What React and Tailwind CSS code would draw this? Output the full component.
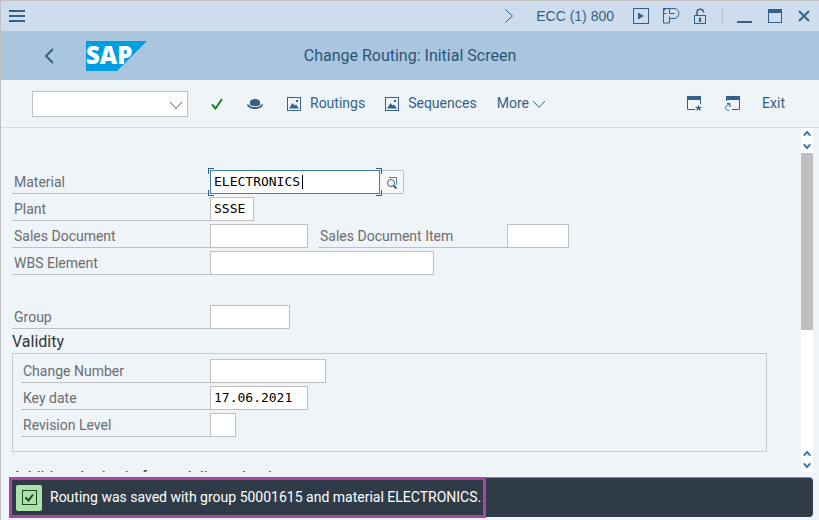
import React, { useState } from "react";

const LABEL = "text-[#6a6d70]";

const Caret = ({ direction = "down", className = "w-3 h-3", strokeWidth = 1 }) => {
  const paths = {
    down: "M1 3.5 L6 9 L11 3.5",
    up: "M1 8.5 L6 3 L11 8.5",
    left: "M9 1 L3 6 L9 11",
    right: "M3 0.5 L9 6 L3 11.5",
  };
  return (
    <svg
      viewBox="0 0 12 12"
      className={className}
      fill="none"
      stroke="currentColor"
      strokeWidth={strokeWidth}
      aria-hidden="true"
    >
      <path d={paths[direction]} vectorEffect="non-scaling-stroke" />
    </svg>
  );
};

const IconButton = ({ label, children, className = "" }) => (
  <button type="button" aria-label={label} className={`flex shrink-0 items-center justify-center ${className}`}>
    {children}
  </button>
);

const PictureIcon = () => (
  <svg viewBox="0 0 14 14" className="h-[14px] w-[14px]" aria-hidden="true">
    <rect x="0.5" y="0.5" width="13" height="13" fill="none" stroke="currentColor" />
    <path d="M2 11.5 L5.5 6 L7.5 8.5 L9 7.5 L12 11.5 Z" fill="currentColor" />
    <rect x="9" y="3" width="2" height="2" fill="currentColor" />
  </svg>
);

const SapLogo = () => (
  <svg viewBox="0 0 61 30" className="h-[30px] w-[61px] overflow-visible" role="img" aria-label="SAP">
    <path d="M0 0 H61 L31 30 H0 Z" fill="#009de0" />
    <text x="0" y="23" fontFamily="Open Sans, sans-serif" fontSize="24" fontWeight="800" fill="#fff">SAP</text>
  </svg>
);

const TitleBar = () => (
  <div className="flex h-[31px] items-center border-b border-[#bfbfbf] bg-[#cddded] pl-2 pr-[9px]">
    <IconButton label="Menu">
      <svg viewBox="0 0 16 12" className="h-3 w-4" fill="currentColor" aria-hidden="true">
        <path d="M0 0 H16 V2 H0 Z M0 5 H16 V7 H0 Z M0 10 H16 V12 H0 Z" />
      </svg>
    </IconButton>
    <div className="ml-auto flex items-center">
      <IconButton label="Expand" className="mr-5">
        <Caret direction="right" className="h-[14px] w-[14px]" />
      </IconButton>
      <span className="mr-[19px] font-['Liberation_Sans',sans-serif] text-[14px]">ECC (1) 800</span>
      <div className="flex items-center gap-[14px]">
        <IconButton label="Run">
          <svg viewBox="0 0 16 16" className="h-4 w-4" aria-hidden="true">
            <rect x="0.5" y="0.5" width="15" height="15" fill="none" stroke="currentColor" />
            <path d="M5 4.5 L11 8 L5 11.5 Z" fill="currentColor" />
          </svg>
        </IconButton>
        <IconButton label="Personalize">
          <svg viewBox="0 0 17 16" className="h-4 w-[17px]" fill="none" stroke="currentColor" aria-hidden="true">
            <path d="M0.5 0.5 H11 C17.5 0.5 17.5 10.5 11 10.5 H6.5 V15 H0.5 Z" />
            <path d="M6.5 0.5 V5.5 H11.5 M0.5 5.5 H3.5 M6.5 8.5 V10.5" />
            <path d="M0.5 0.5 H3 L0.5 3 Z" fill="currentColor" />
          </svg>
        </IconButton>
        <IconButton label="Unlock">
          <svg viewBox="0 0 12 16" className="h-4 w-3" fill="none" stroke="currentColor" aria-hidden="true">
            <rect x="0.5" y="7.5" width="11" height="8" />
            <path d="M3 7 V4 C3 0.3 9.5 0 9.5 4.5" strokeWidth="1.5" />
            <path d="M6 9.5 V13.5" strokeWidth="2" />
            <path d="M4.5 13 H7.5" />
          </svg>
        </IconButton>
      </div>
      <span className="ml-4 mr-[14px] h-4 w-px bg-[#bfbfbf]" />
      <div className="flex items-center gap-4">
        <IconButton label="Minimize">
          <svg viewBox="0 0 15 16" className="h-4 w-[15px]" fill="currentColor" aria-hidden="true">
            <path d="M0 13 H15 V15 H0 Z" />
          </svg>
        </IconButton>
        <IconButton label="Maximize">
          <svg viewBox="0 0 14 14" className="h-[14px] w-[14px]" aria-hidden="true">
            <rect x="0.5" y="0.5" width="13" height="13" fill="none" stroke="currentColor" />
            <path d="M0 0 H14 V4 H0 Z" fill="currentColor" />
          </svg>
        </IconButton>
        <IconButton label="Close">
          <svg viewBox="0 0 12 12" className="h-3 w-3" fill="none" stroke="currentColor" strokeWidth="2" aria-hidden="true">
            <path d="M1 1 L11 11 M11 1 L1 11" />
          </svg>
        </IconButton>
      </div>
    </div>
  </div>
);

const Header = () => (
  <header className="grid h-12 grid-cols-[1fr_auto_1fr] items-center bg-[#a9c6de]">
    <div className="flex items-center gap-8 pl-[43px]">
      <IconButton label="Back">
        <svg viewBox="0 0 10 16" className="h-4 w-[10px]" fill="none" stroke="currentColor" strokeWidth="2" aria-hidden="true">
          <path d="M9 1 L2 8 L9 15" />
        </svg>
      </IconButton>
      <SapLogo />
    </div>
    <h1 className="text-[16px] text-[#2d5475]">Change Routing: Initial Screen</h1>
  </header>
);

const Toolbar = () => (
  <div className="flex h-12 items-center border-b border-[#cddded] pl-[31px] pr-[34px]">
    <div className="relative">
      <input
        type="text"
        aria-label="Command"
        className="block h-[26px] w-[156px] border border-[#bfbfbf] bg-white px-1 outline-none"
      />
      <button type="button" aria-label="Command history" className="absolute right-[5px] top-[7px]">
        <Caret className="h-[14px] w-[14px]" />
      </button>
    </div>
    <IconButton label="Enter" className="ml-[23px]">
      <svg viewBox="0 0 12 12" className="h-3 w-3" fill="none" stroke="#1b7d2b" strokeWidth="2" aria-hidden="true">
        <path d="M1 6.5 L4.5 10.5 L11 1" />
      </svg>
    </IconButton>
    <IconButton label="Header" className="ml-6">
      <svg viewBox="0 0 16 10" className="h-[10px] w-4" fill="currentColor" aria-hidden="true">
        <path d="M3 6 V3 C3 -1 13 -1 13 3 V6 C11 7.5 5 7.5 3 6 Z" />
        <path d="M0 5.5 C1 5 2 5.5 2.2 6.5 C5 8.5 11 8.5 13.8 6.5 C14 5.5 15 5 16 5.5 C15 11.5 1 11.5 0 5.5 Z" />
      </svg>
    </IconButton>
    <button type="button" className="ml-6 flex items-center gap-[9px]">
      <PictureIcon />
      Routings
    </button>
    <button type="button" className="ml-5 flex items-center gap-[9px]">
      <PictureIcon />
      Sequences
    </button>
    <button type="button" className="ml-5 flex items-center gap-[3px]">
      More
      <Caret className="h-[14px] w-[14px]" />
    </button>
    <div className="ml-auto flex items-center">
      <IconButton label="Create favorite">
        <svg viewBox="0 0 15 15" className="h-[15px] w-[15px]" aria-hidden="true">
          <path d="M8 13.5 H0.5 V0.5 H13.5 V8" fill="none" stroke="currentColor" />
          <path d="M0 0 H14 V4 H0 Z" fill="currentColor" />
          <path d="M11.5 8.5 L12.4 11 H15 L13 12.5 L13.8 15 L11.5 13.5 L9.2 15 L10 12.5 L8 11 H10.6 Z" fill="currentColor" />
        </svg>
      </IconButton>
      <IconButton label="Create shortcut" className="ml-[23px]">
        <svg viewBox="0 0 15 15" className="h-[15px] w-[15px]" aria-hidden="true">
          <path d="M1.5 5 V0.5 H14.5 V13.5 H7" fill="none" stroke="currentColor" />
          <path d="M1 0 H15 V4 H1 Z" fill="currentColor" />
          <path d="M4 14.5 C-1 14 0 8.5 4.5 8.5 M2 7.5 H5 V11" fill="none" stroke="currentColor" />
        </svg>
      </IconButton>
      <button type="button" className="ml-[22px]">Exit</button>
    </div>
  </div>
);

const Field = ({ id, label, value, labelWidth, inputWidth }) => (
  <div className="flex h-6">
    <label htmlFor={id} className={`flex items-center border-b border-[#bfbfbf] pl-[2px] pt-[2px] ${LABEL} ${labelWidth}`}>
      {label}
    </label>
    <input
      id={id}
      type="text"
      defaultValue={value}
      className={`h-6 border border-[#bfbfbf] bg-white px-[3px] pb-[2px] font-['DejaVu_Sans_Mono',monospace] text-[13px] text-black outline-none ${inputWidth}`}
    />
  </div>
);

const MaterialField = () => {
  const [material, setMaterial] = useState("ELECTRONICS");
  return (
    <div className="flex h-6">
      <label htmlFor="material" className={`flex w-[198px] items-center border-b border-[#bfbfbf] pl-[2px] pt-[2px] ${LABEL}`}>
        Material
      </label>
      <div className="relative">
        <input
          id="material"
          type="text"
          value={material}
          onChange={(e) => setMaterial(e.target.value)}
          className="block h-6 w-[170px] border border-[#427cac] bg-white px-[3px] pb-[2px] font-['DejaVu_Sans_Mono',monospace] text-[13px] text-black outline-none"
        />
        <span className="absolute left-[92px] top-[5px] h-[14px] w-px bg-black" />
        {/* focus corners */}
        <span className="absolute -left-[2px] -top-[2px] h-[6px] w-[6px] border-l border-t border-[#346187]" />
        <span className="absolute -right-[2px] -top-[2px] h-[6px] w-[6px] border-r border-t border-[#346187]" />
        <span className="absolute -bottom-[2px] -left-[2px] h-[6px] w-[6px] border-b border-l border-[#346187]" />
        <span className="absolute -bottom-[2px] -right-[2px] h-[6px] w-[6px] border-b border-r border-[#346187]" />
      </div>
      <IconButton
        label="Search material"
        className="h-6 w-6 rounded-r-[2px] border border-l-0 border-[#bfbfbf] bg-[#f7f7f7] pt-[2px] text-[#346187]"
      >
        <svg viewBox="0 0 12 12" className="h-3 w-3" fill="none" stroke="currentColor" aria-hidden="true">
          <path d="M3 0.5 H10.5 V8" strokeWidth="0.8" />
          <circle cx="5" cy="6" r="3.5" />
          <path d="M7.5 8.5 L10.5 11.5" strokeWidth="2" />
        </svg>
      </IconButton>
    </div>
  );
};

const ScrollBar = () => (
  <div className="mr-[6px] flex w-3 shrink-0 flex-col items-center bg-white text-[#3b76a6]">
    <button type="button" aria-label="Scroll up" className="flex h-3 items-center">
      <Caret direction="up" className="h-2 w-2" strokeWidth={2} />
    </button>
    <button type="button" aria-label="Scroll down by line" className="flex h-[13px] items-center pb-[2px]">
      <Caret className="h-2 w-2" strokeWidth={2} />
    </button>
    <div className="h-[177px] w-full bg-[#bfbfbf]" />
    <button type="button" aria-label="Scroll up by line" className="mt-auto flex h-3 items-center">
      <Caret direction="up" className="h-2 w-2" strokeWidth={2} />
    </button>
    <button type="button" aria-label="Scroll down" className="flex h-3 items-center pb-[2px]">
      <Caret className="h-2 w-2" strokeWidth={2} />
    </button>
  </div>
);

const StatusBar = () => (
  <footer className="mb-[3px] ml-2 mr-[6px] flex h-10 items-center rounded border-t border-[#84919b] bg-[#2f3c48] text-white">
    <div className="-my-px flex h-[41px] items-center gap-2 border-[3px] border-[#a349a4] pl-1 pr-[2px]">
      <span className="flex h-[26px] w-[26px] items-center justify-center rounded-[2px] bg-[#abe2ab] text-[#174a17]">
        <svg viewBox="0 0 15 15" className="h-[15px] w-[15px]" fill="none" stroke="currentColor" aria-hidden="true">
          <rect x="0.5" y="0.5" width="14" height="14" />
          <path d="M3.5 7.5 L6.5 10.5 L11 4.5" strokeWidth="2" />
        </svg>
      </span>
      <p role="status" className="whitespace-nowrap">
        Routing was saved with group 50001615 and material ELECTRONICS.
      </p>
    </div>
  </footer>
);

const App = () => (
  <div className="flex h-screen flex-col overflow-hidden border-l border-t border-[#bfbfbf] bg-[#eff4f9] font-['Roboto',sans-serif] text-[14px] text-[#346187]">
    <TitleBar />
    <Header />
    <Toolbar />
    <div className="mb-[5px] flex min-h-0 flex-1">
      <main className="min-w-0 flex-1 overflow-hidden pl-[11px] pr-[34px] pt-[42px]">
        <div className="flex flex-col gap-[3px]">
          <MaterialField />
          <Field id="plant" label="Plant" value="SSSE" labelWidth="w-[198px]" inputWidth="w-11" />
          <div className="flex gap-[10px]">
            <Field id="sales-document" label="Sales Document" labelWidth="w-[198px]" inputWidth="w-[98px]" />
            <Field id="sales-item" label="Sales Document Item" labelWidth="w-[189px]" inputWidth="w-[62px]" />
          </div>
          <Field id="wbs" label="WBS Element" labelWidth="w-[198px]" inputWidth="w-56" />
        </div>
        <div className="mt-[30px]">
          <Field id="group" label="Group" labelWidth="w-[198px]" inputWidth="w-20" />
        </div>
        <section>
          <h2 className="h-6 text-[16px] leading-[26px] text-[#32363a]">Validity</h2>
          <div className="flex h-[99px] flex-col gap-[3px] border border-[#c9cccf] pl-2 pt-[5px]">
            <Field id="change-number" label="Change Number" labelWidth="w-[189px]" inputWidth="w-[116px]" />
            <Field id="key-date" label="Key date" value="17.06.2021" labelWidth="w-[189px]" inputWidth="w-[98px]" />
            <Field id="revision" label="Revision Level" labelWidth="w-[189px]" inputWidth="w-[26px]" />
          </div>
        </section>
        <h2 className="mt-4 text-[16px] leading-5 text-[#32363a]">Additional criteria for task list selection</h2>
      </main>
      <ScrollBar />
    </div>
    <StatusBar />
  </div>
);

export default App;
